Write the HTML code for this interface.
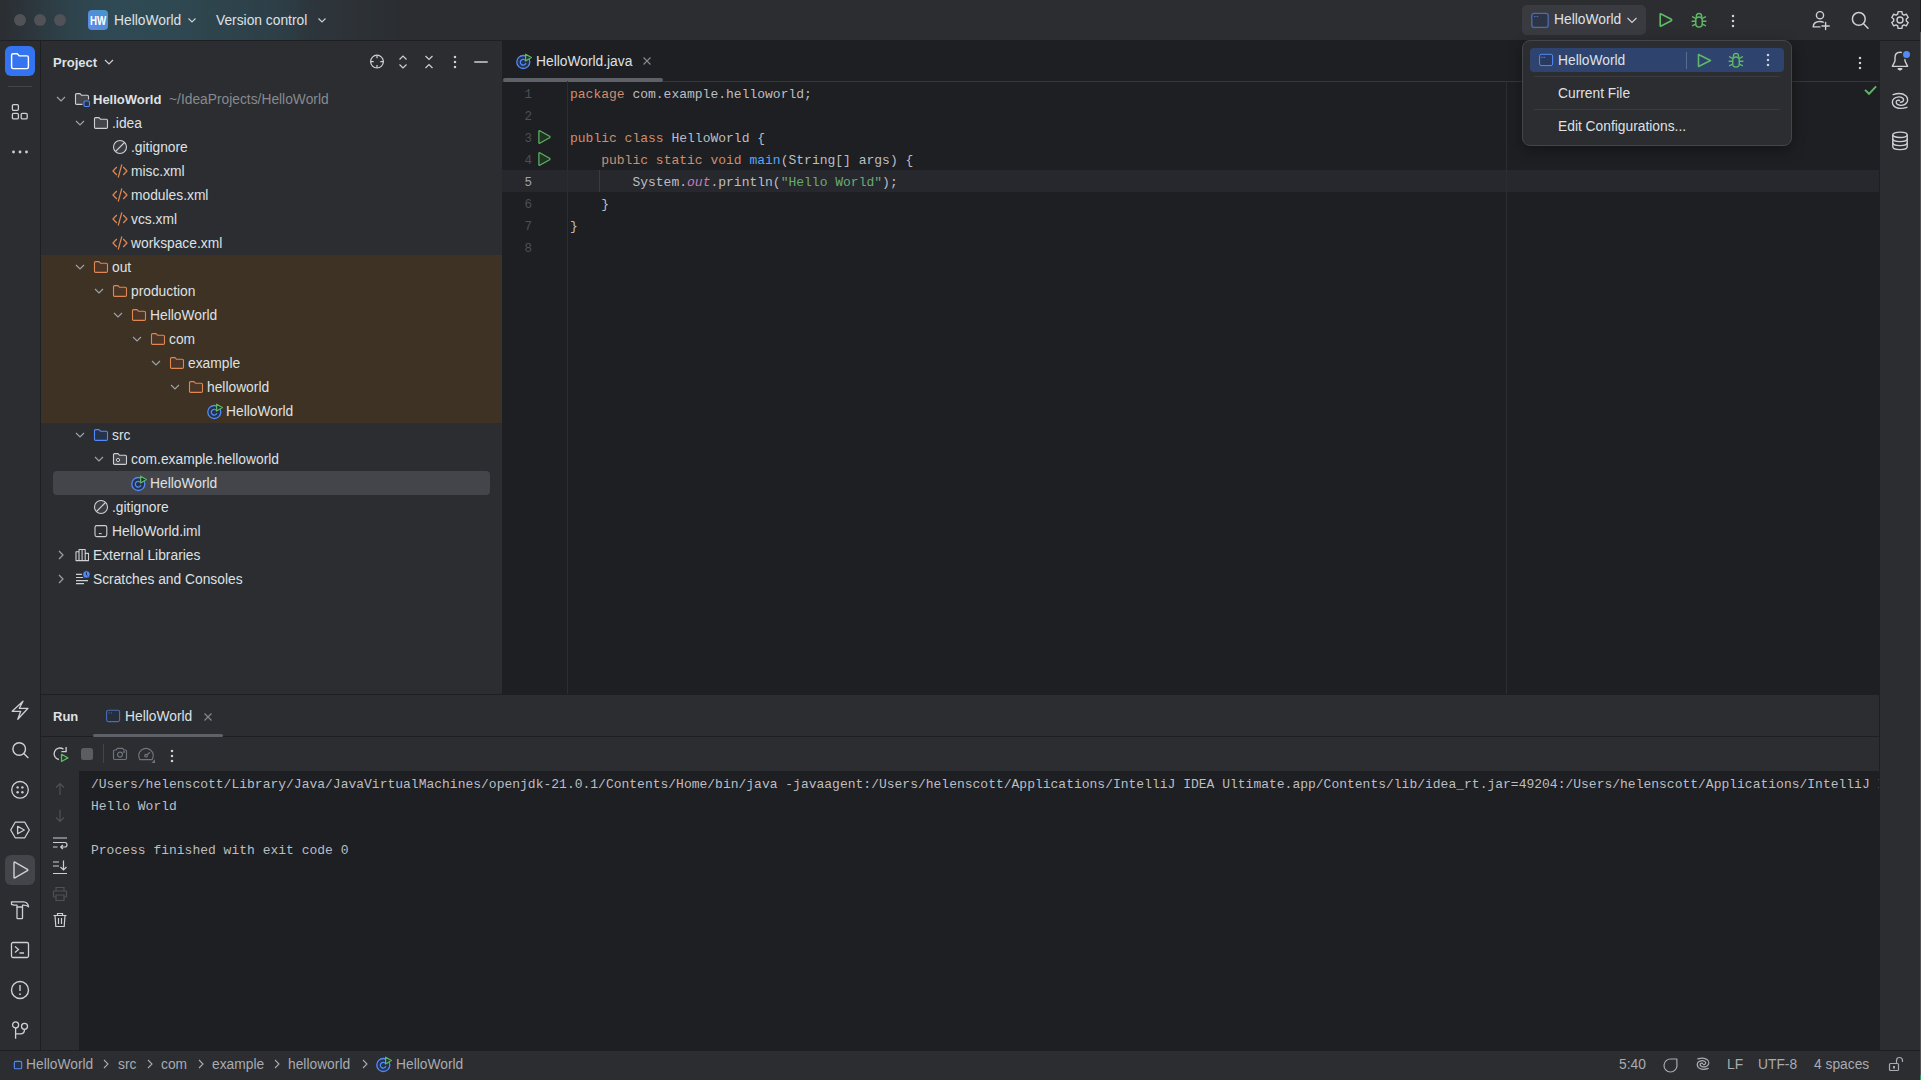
<!DOCTYPE html>
<html><head><meta charset="utf-8">
<style>
*{box-sizing:border-box;margin:0;padding:0}
html,body{width:1921px;height:1080px;overflow:hidden;background:#2B2D30;font-family:"Liberation Sans",sans-serif;font-size:14px;color:#DFE1E5}
.a{position:absolute}
svg{position:absolute;overflow:visible}
.t{position:absolute;white-space:pre;line-height:16px;font-size:13.8px}
.m{font-family:"Liberation Mono",monospace;font-size:13px;white-space:pre;position:absolute;line-height:22px}
#title{left:0;top:0;width:1921px;height:40px;background:linear-gradient(90deg,#2B2E32 0px,#2C363C 30px,#2E434C 70px,#2F4A55 115px,#2F4952 160px,#2E434C 230px,#2D3D45 290px,#2D363D 305px,#2C3136 360px,#2B2D30 410px)}
</style></head><body>
<!-- title bar -->
<div id="title" class="a"></div>
<div class="a" style="left:0;top:40px;width:1921px;height:1px;background:#1E1F22"></div>
<!-- traffic lights -->
<div class="a" style="left:14px;top:14px;width:12px;height:12px;border-radius:6px;background:#505257"></div>
<div class="a" style="left:34px;top:14px;width:12px;height:12px;border-radius:6px;background:#505257"></div>
<div class="a" style="left:54px;top:14px;width:12px;height:12px;border-radius:6px;background:#505257"></div>
<!-- HW badge -->
<div class="a" style="left:88px;top:10px;width:20px;height:20px;border-radius:4px;background:linear-gradient(45deg,#5E88EC,#4596C6)"></div>
<div class="t" style="left:86px;top:12.5px;width:24px;text-align:center;font-size:13.5px;font-weight:bold;color:#fff;letter-spacing:-0.3px;transform:scaleX(0.72)">HW</div>
<div class="t" style="left:114px;top:13px;">HelloWorld</div>
<svg style="left:187px;top:16px" width="10" height="8" viewBox="0 0 10 8"><path d="M1.5 2.5 L5 6 L8.5 2.5" fill="none" stroke="#CED0D6" stroke-width="1.1"/></svg>
<div class="t" style="left:216px;top:13px;">Version control</div>
<svg style="left:317px;top:16px" width="10" height="8" viewBox="0 0 10 8"><path d="M1.5 2.5 L5 6 L8.5 2.5" fill="none" stroke="#CED0D6" stroke-width="1.1"/></svg>

<!-- run config widget -->
<div class="a" style="left:1522px;top:5px;width:124px;height:30px;border-radius:5px;background:#393B40"></div>
<svg style="left:1530px;top:12px" width="20" height="17" viewBox="0 0 20 17"><rect x="1.8" y="1.3" width="16.4" height="14" rx="2.2" fill="#2D3446" stroke="#4B6DB0" stroke-width="1.3"/><rect x="4" y="4" width="1.6" height="1.1" fill="#4B6DB0"/><rect x="6.6" y="4" width="1.6" height="1.1" fill="#4B6DB0"/></svg>
<div class="t" style="left:1554px;top:12px;">HelloWorld</div>
<svg style="left:1626px;top:16px" width="12" height="8" viewBox="0 0 12 8"><path d="M1.5 2 L6 6.5 L10.5 2" fill="none" stroke="#CED0D6" stroke-width="1.2"/></svg>
<!-- play -->
<svg style="left:1658px;top:12px" width="16" height="16" viewBox="0 0 16 16"><path d="M2.2 2.4 Q2.2 1.4 3.1 1.9 L13.3 7.3 Q14.1 8 13.3 8.7 L3.1 14.1 Q2.2 14.6 2.2 13.6 Z" fill="none" stroke="#5FB865" stroke-width="1.7" stroke-linejoin="round"/></svg>
<!-- bug -->
<svg style="left:1691px;top:12px" width="16" height="16" viewBox="0 0 16 16" fill="none" stroke="#5FB865" stroke-width="1.5" stroke-linecap="round"><path d="M5.3 4.6 Q5.3 1.4 8 1.4 Q10.7 1.4 10.7 4.6"/><rect x="4.7" y="5" width="6.6" height="10" rx="3.3" fill="#2B2D30"/><path d="M4.6 6.3 L1.6 4.8 M4.6 9.2 H1.1 M4.6 12.2 L1.6 13.7 M11.4 6.3 L14.4 4.8 M11.4 9.2 H14.9 M11.4 12.2 L14.4 13.7"/></svg>
<!-- more -->
<svg style="left:1730px;top:13px" width="6" height="16" viewBox="0 0 6 16" fill="#CED0D6"><rect x="1.9" y="1.9" width="2.2" height="2.2"/><rect x="1.9" y="6.9" width="2.2" height="2.2"/><rect x="1.9" y="11.9" width="2.2" height="2.2"/></svg>
<!-- add user -->
<svg style="left:1810px;top:10px" width="22" height="22" viewBox="0 0 22 22" fill="none" stroke="#CED0D6" stroke-width="1.4" stroke-linecap="round"><circle cx="10" cy="5.2" r="3.6"/><path d="M10 16.9 H3.2 Q3.2 11.5 10 11.5 Q11.8 11.5 13.2 12.2"/><path d="M15.6 12.4 V19.6 M12 16 H19.2"/></svg>
<!-- search -->
<svg style="left:1850px;top:10px" width="20" height="20" viewBox="0 0 20 20" fill="none" stroke="#CED0D6" stroke-width="1.5" stroke-linecap="round"><circle cx="8.8" cy="8.9" r="6.4"/><path d="M13.6 13.8 L18 18.2"/></svg>
<!-- settings -->
<svg style="left:1890px;top:10px" width="20" height="20" viewBox="0 0 20 20" fill="none" stroke="#CED0D6" stroke-width="1.4" stroke-linejoin="round"><path d="M7.73 4.02 L8.07 1.62 L11.93 1.62 L12.27 4.02 L14.04 5.04 L16.29 4.13 L18.22 7.49 L16.32 8.98 L16.32 11.02 L18.22 12.51 L16.29 15.87 L14.04 14.96 L12.27 15.98 L11.93 18.38 L8.07 18.38 L7.73 15.98 L5.96 14.96 L3.71 15.87 L1.78 12.51 L3.68 11.02 L3.68 8.98 L1.78 7.49 L3.71 4.13 L5.96 5.04 Z"/><circle cx="10" cy="10" r="3"/></svg>


<!-- left stripe -->
<div class="a" style="left:0;top:41px;width:40px;height:1009px;background:#2B2D30"></div>
<div class="a" style="left:40px;top:41px;width:1px;height:1009px;background:#1E1F22"></div>


<!-- left stripe icons -->
<div class="a" style="left:5px;top:46px;width:30px;height:30px;border-radius:6px;background:#3574F0"></div>
<svg style="left:10px;top:52px" width="20" height="18" viewBox="0 0 20 18" fill="none" stroke="#fff" stroke-width="1.4" stroke-linejoin="round"><path d="M1.6 3.3 Q1.6 1.8 3.1 1.8 H7.3 L9.3 3.9 H16.9 Q18.4 3.9 18.4 5.4 V15.1 Q18.4 16.6 16.9 16.6 H3.1 Q1.6 16.6 1.6 15.1 Z"/></svg>
<div class="a" style="left:8px;top:86px;width:24px;height:1px;background:#43454A"></div>
<svg style="left:10px;top:103px" width="20" height="18" viewBox="0 0 20 18" fill="none" stroke="#CED0D6" stroke-width="1.3"><rect x="2.4" y="1.7" width="6" height="5.6" rx="1.2"/><rect x="2.4" y="10.3" width="6" height="5.6" rx="1.2"/><rect x="11.2" y="10.3" width="6" height="5.6" rx="1.2"/></svg>
<svg style="left:10px;top:146px" width="20" height="12" viewBox="0 0 20 12" fill="#CED0D6"><circle cx="3.5" cy="6" r="1.4"/><circle cx="10" cy="6" r="1.4"/><circle cx="16.5" cy="6" r="1.4"/></svg>

<!-- bottom group -->
<svg style="left:10px;top:700px" width="20" height="20" viewBox="0 0 20 20" fill="none" stroke="#CED0D6" stroke-width="1.3" stroke-linejoin="round"><path d="M13 1.2 L9.3 8.3 H18 L7.8 19.2 L10.7 11.3 H2.2 Z"/></svg>
<svg style="left:10px;top:740px" width="20" height="20" viewBox="0 0 20 20" fill="none" stroke="#CED0D6" stroke-width="1.4"><circle cx="9.2" cy="9" r="6.3"/><path d="M13.8 13.6 L18.3 18.1"/></svg>
<svg style="left:10px;top:780px" width="20" height="20" viewBox="0 0 20 20" fill="none" stroke="#CED0D6" stroke-width="1.3"><circle cx="10" cy="9.8" r="8.3"/><g fill="#CED0D6" stroke="none"><circle cx="7.6" cy="7.4" r="1.2"/><circle cx="12.4" cy="7.4" r="1.2"/><circle cx="7.6" cy="12.2" r="1.2"/><circle cx="12.4" cy="12.2" r="1.2"/></g></svg>
<svg style="left:10px;top:820px" width="20" height="20" viewBox="0 0 20 20" fill="none" stroke="#CED0D6" stroke-width="1.3" stroke-linejoin="round"><path d="M5.2 2.2 H14.8 L19.3 10 L14.8 17.8 H5.2 L0.7 10 Z"/><path d="M7.6 6.3 L14.3 10 L7.6 13.7 Z"/></svg>
<div class="a" style="left:5px;top:855px;width:30px;height:30px;border-radius:6px;background:#43454A"></div>
<svg style="left:10px;top:860px" width="20" height="20" viewBox="0 0 20 20" fill="none" stroke="#CED0D6" stroke-width="1.4" stroke-linejoin="round"><path d="M4 2.6 Q4 1.8 4.8 2.2 L17.4 9.3 Q18.2 10 17.4 10.7 L4.8 17.8 Q4 18.2 4 17.4 Z"/></svg>
<svg style="left:10px;top:900px" width="20" height="20" viewBox="0 0 20 20" fill="none" stroke="#CED0D6" stroke-width="1.3" stroke-linejoin="round"><path d="M1.5 1.8 H13.5 Q18 2 18.6 6.8 Q16.5 5.2 13.5 5.2 H12.5 V7 H7 V5.2 H3.8 L1.5 4.3 Z"/><path d="M7 7 V18 Q7 18.6 7.6 18.6 H11.9 Q12.5 18.6 12.5 18 V7"/></svg>
<svg style="left:10px;top:940px" width="20" height="20" viewBox="0 0 20 20" fill="none" stroke="#CED0D6" stroke-width="1.3"><rect x="1.5" y="2.5" width="17" height="15" rx="1.5"/><path d="M5 6.5 L8.5 9.5 L5 12.5 M9.5 13 H14"/></svg>
<svg style="left:10px;top:980px" width="20" height="20" viewBox="0 0 20 20" fill="none" stroke="#CED0D6" stroke-width="1.4"><circle cx="10" cy="10" r="8.5"/><path d="M10 5 V11"/><circle cx="10" cy="14.2" r="0.9" fill="#CED0D6" stroke="none"/></svg>
<svg style="left:10px;top:1020px" width="20" height="20" viewBox="0 0 20 20" fill="none" stroke="#CED0D6" stroke-width="1.3"><circle cx="5.6" cy="4.9" r="3"/><circle cx="14.5" cy="6.3" r="3"/><path d="M5.6 7.9 V18.7 M5.6 13.9 H10.5 Q14.5 13.9 14.5 9.3"/></svg>

<!-- project panel -->
<div class="a" id="proj" style="left:41px;top:41px;width:461px;height:653px;background:#2B2D30"></div>

<div id="tree">
<div class="t" style="left:53px;top:55px;font-size:13px;font-weight:bold">Project</div>
<svg style="left:104px;top:57px" width="10" height="10" viewBox="0 0 10 10"><path d="M1 3 L5 7 L9 3" fill="none" stroke="#CED0D6" stroke-width="1.2"/></svg>
<svg style="left:369px;top:54px" width="16" height="16" viewBox="0 0 16 16" fill="none" stroke="#CED0D6" stroke-width="1.2"><circle cx="8" cy="7.6" r="6.4"/><path d="M8 1.2 V4.3 M8 10.9 V14 M1.6 7.6 H4.7 M11.3 7.6 H14.4"/></svg>
<svg style="left:395px;top:54px" width="16" height="16" viewBox="0 0 16 16" fill="none" stroke="#CED0D6" stroke-width="1.2"><path d="M4.5 5.5 L8 2 L11.5 5.5 M4.5 10.5 L8 14 L11.5 10.5"/></svg>
<svg style="left:421px;top:54px" width="16" height="16" viewBox="0 0 16 16" fill="none" stroke="#CED0D6" stroke-width="1.2"><path d="M4.5 2 L8 5.5 L11.5 2 M4.5 14 L8 10.5 L11.5 14"/></svg>
<svg style="left:452px;top:54px" width="6" height="16" viewBox="0 0 6 16" fill="#CED0D6"><rect x="1.9" y="1.9" width="2.2" height="2.2"/><rect x="1.9" y="6.9" width="2.2" height="2.2"/><rect x="1.9" y="11.9" width="2.2" height="2.2"/></svg>
<div class="a" style="left:474px;top:61px;width:13.5px;height:2px;border-radius:1px;background:#A4A7AD"></div>
<div class="a" style="left:41px;top:255px;width:461px;height:168px;background:#3D3223"></div>
<div class="a" style="left:53px;top:471px;width:437px;height:24px;border-radius:4px;background:#43454A"></div>
<svg style="left:56px;top:94px" width="10" height="10" viewBox="0 0 10 10"><path d="M1 3 L5 7 L9 3" fill="none" stroke="#9DA0A8" stroke-width="1.2"/></svg>
<svg style="left:74px;top:91px" width="16" height="16" viewBox="0 0 16 16"><path d="M8.5 13.4 H2.7 Q1.5 13.4 1.5 12.2 V3.8 Q1.5 2.6 2.7 2.6 H6 L7.6 4.3 H13.3 Q14.5 4.3 14.5 5.5 V8.5" fill="#43454A" stroke="#CED0D6" stroke-width="1.1" stroke-linejoin="round"/><rect x="10" y="10" width="5.5" height="5.5" rx="1.2" fill="#25324D" stroke="#548AF7" stroke-width="1.1"/></svg>
<div class="t" style="left:93px;top:92px;font-size:13px;font-weight:bold">HelloWorld</div>
<div class="t" style="left:169px;top:92px;color:#868A91">~/IdeaProjects/HelloWorld</div>
<svg style="left:75px;top:118px" width="10" height="10" viewBox="0 0 10 10"><path d="M1 3 L5 7 L9 3" fill="none" stroke="#9DA0A8" stroke-width="1.2"/></svg>
<svg style="left:93px;top:115px" width="16" height="16" viewBox="0 0 16 16"><path d="M1.5 3.8 Q1.5 2.6 2.7 2.6 H6 L7.6 4.3 H13.3 Q14.5 4.3 14.5 5.5 V12.2 Q14.5 13.4 13.3 13.4 H2.7 Q1.5 13.4 1.5 12.2 Z" fill="#43454A" stroke="#CED0D6" stroke-width="1.1" stroke-linejoin="round"/></svg>
<div class="t" style="left:112px;top:116px">.idea</div>
<svg style="left:112px;top:139px" width="16" height="16" viewBox="0 0 16 16" fill="none" stroke="#CED0D6" stroke-width="1.1"><circle cx="8" cy="8" r="6.5" fill="#3A3C40"/><path d="M3.5 12.5 L12.5 3.5"/></svg>
<div class="t" style="left:131px;top:140px">.gitignore</div>
<svg style="left:112px;top:163px" width="16" height="16" viewBox="0 0 16 16" fill="none" stroke="#E08855" stroke-width="1.2" stroke-linejoin="round"><path d="M4.8 4 L1 8 L4.8 12 M11.2 4 L15 8 L11.2 12 M9.8 1.5 L6.2 14.5"/></svg>
<div class="t" style="left:131px;top:164px">misc.xml</div>
<svg style="left:112px;top:187px" width="16" height="16" viewBox="0 0 16 16" fill="none" stroke="#E08855" stroke-width="1.2" stroke-linejoin="round"><path d="M4.8 4 L1 8 L4.8 12 M11.2 4 L15 8 L11.2 12 M9.8 1.5 L6.2 14.5"/></svg>
<div class="t" style="left:131px;top:188px">modules.xml</div>
<svg style="left:112px;top:211px" width="16" height="16" viewBox="0 0 16 16" fill="none" stroke="#E08855" stroke-width="1.2" stroke-linejoin="round"><path d="M4.8 4 L1 8 L4.8 12 M11.2 4 L15 8 L11.2 12 M9.8 1.5 L6.2 14.5"/></svg>
<div class="t" style="left:131px;top:212px">vcs.xml</div>
<svg style="left:112px;top:235px" width="16" height="16" viewBox="0 0 16 16" fill="none" stroke="#E08855" stroke-width="1.2" stroke-linejoin="round"><path d="M4.8 4 L1 8 L4.8 12 M11.2 4 L15 8 L11.2 12 M9.8 1.5 L6.2 14.5"/></svg>
<div class="t" style="left:131px;top:236px">workspace.xml</div>
<svg style="left:75px;top:262px" width="10" height="10" viewBox="0 0 10 10"><path d="M1 3 L5 7 L9 3" fill="none" stroke="#9DA0A8" stroke-width="1.2"/></svg>
<svg style="left:93px;top:259px" width="16" height="16" viewBox="0 0 16 16"><path d="M1.5 3.8 Q1.5 2.6 2.7 2.6 H6 L7.6 4.3 H13.3 Q14.5 4.3 14.5 5.5 V12.2 Q14.5 13.4 13.3 13.4 H2.7 Q1.5 13.4 1.5 12.2 Z" fill="#4A3526" stroke="#E08855" stroke-width="1.1" stroke-linejoin="round"/></svg>
<div class="t" style="left:112px;top:260px">out</div>
<svg style="left:94px;top:286px" width="10" height="10" viewBox="0 0 10 10"><path d="M1 3 L5 7 L9 3" fill="none" stroke="#9DA0A8" stroke-width="1.2"/></svg>
<svg style="left:112px;top:283px" width="16" height="16" viewBox="0 0 16 16"><path d="M1.5 3.8 Q1.5 2.6 2.7 2.6 H6 L7.6 4.3 H13.3 Q14.5 4.3 14.5 5.5 V12.2 Q14.5 13.4 13.3 13.4 H2.7 Q1.5 13.4 1.5 12.2 Z" fill="#4A3526" stroke="#E08855" stroke-width="1.1" stroke-linejoin="round"/></svg>
<div class="t" style="left:131px;top:284px">production</div>
<svg style="left:113px;top:310px" width="10" height="10" viewBox="0 0 10 10"><path d="M1 3 L5 7 L9 3" fill="none" stroke="#9DA0A8" stroke-width="1.2"/></svg>
<svg style="left:131px;top:307px" width="16" height="16" viewBox="0 0 16 16"><path d="M1.5 3.8 Q1.5 2.6 2.7 2.6 H6 L7.6 4.3 H13.3 Q14.5 4.3 14.5 5.5 V12.2 Q14.5 13.4 13.3 13.4 H2.7 Q1.5 13.4 1.5 12.2 Z" fill="#4A3526" stroke="#E08855" stroke-width="1.1" stroke-linejoin="round"/></svg>
<div class="t" style="left:150px;top:308px">HelloWorld</div>
<svg style="left:132px;top:334px" width="10" height="10" viewBox="0 0 10 10"><path d="M1 3 L5 7 L9 3" fill="none" stroke="#9DA0A8" stroke-width="1.2"/></svg>
<svg style="left:150px;top:331px" width="16" height="16" viewBox="0 0 16 16"><path d="M1.5 3.8 Q1.5 2.6 2.7 2.6 H6 L7.6 4.3 H13.3 Q14.5 4.3 14.5 5.5 V12.2 Q14.5 13.4 13.3 13.4 H2.7 Q1.5 13.4 1.5 12.2 Z" fill="#4A3526" stroke="#E08855" stroke-width="1.1" stroke-linejoin="round"/></svg>
<div class="t" style="left:169px;top:332px">com</div>
<svg style="left:151px;top:358px" width="10" height="10" viewBox="0 0 10 10"><path d="M1 3 L5 7 L9 3" fill="none" stroke="#9DA0A8" stroke-width="1.2"/></svg>
<svg style="left:169px;top:355px" width="16" height="16" viewBox="0 0 16 16"><path d="M1.5 3.8 Q1.5 2.6 2.7 2.6 H6 L7.6 4.3 H13.3 Q14.5 4.3 14.5 5.5 V12.2 Q14.5 13.4 13.3 13.4 H2.7 Q1.5 13.4 1.5 12.2 Z" fill="#4A3526" stroke="#E08855" stroke-width="1.1" stroke-linejoin="round"/></svg>
<div class="t" style="left:188px;top:356px">example</div>
<svg style="left:170px;top:382px" width="10" height="10" viewBox="0 0 10 10"><path d="M1 3 L5 7 L9 3" fill="none" stroke="#9DA0A8" stroke-width="1.2"/></svg>
<svg style="left:188px;top:379px" width="16" height="16" viewBox="0 0 16 16"><path d="M1.5 3.8 Q1.5 2.6 2.7 2.6 H6 L7.6 4.3 H13.3 Q14.5 4.3 14.5 5.5 V12.2 Q14.5 13.4 13.3 13.4 H2.7 Q1.5 13.4 1.5 12.2 Z" fill="#4A3526" stroke="#E08855" stroke-width="1.1" stroke-linejoin="round"/></svg>
<div class="t" style="left:207px;top:380px">helloworld</div>
<svg style="left:207px;top:403px" width="16" height="16" viewBox="0 0 16 16"><circle cx="7.3" cy="9" r="6.5" fill="#25324D" stroke="#548AF7" stroke-width="1.3"/><path d="M9.6 7.6 A2.9 2.9 0 1 0 9.9 10.3" fill="none" stroke="#548AF7" stroke-width="1.3"/><path d="M9.6 1.2 L15.4 4.6 L9.6 8 Z" fill="#1F3A25" stroke="#5FB865" stroke-width="1.2" stroke-linejoin="round"/></svg>
<div class="t" style="left:226px;top:404px">HelloWorld</div>
<svg style="left:75px;top:430px" width="10" height="10" viewBox="0 0 10 10"><path d="M1 3 L5 7 L9 3" fill="none" stroke="#9DA0A8" stroke-width="1.2"/></svg>
<svg style="left:93px;top:427px" width="16" height="16" viewBox="0 0 16 16"><path d="M1.5 3.8 Q1.5 2.6 2.7 2.6 H6 L7.6 4.3 H13.3 Q14.5 4.3 14.5 5.5 V12.2 Q14.5 13.4 13.3 13.4 H2.7 Q1.5 13.4 1.5 12.2 Z" fill="#25324D" stroke="#548AF7" stroke-width="1.1" stroke-linejoin="round"/></svg>
<div class="t" style="left:112px;top:428px">src</div>
<svg style="left:94px;top:454px" width="10" height="10" viewBox="0 0 10 10"><path d="M1 3 L5 7 L9 3" fill="none" stroke="#9DA0A8" stroke-width="1.2"/></svg>
<svg style="left:112px;top:451px" width="16" height="16" viewBox="0 0 16 16"><path d="M1.5 3.8 Q1.5 2.6 2.7 2.6 H6 L7.6 4.3 H13.3 Q14.5 4.3 14.5 5.5 V12.2 Q14.5 13.4 13.3 13.4 H2.7 Q1.5 13.4 1.5 12.2 Z" fill="#43454A" stroke="#CED0D6" stroke-width="1.1" stroke-linejoin="round"/><circle cx="6" cy="9" r="1.6" fill="#2B2D30" stroke="#CED0D6" stroke-width="1"/></svg>
<div class="t" style="left:131px;top:452px">com.example.helloworld</div>
<svg style="left:131px;top:475px" width="16" height="16" viewBox="0 0 16 16"><circle cx="7.3" cy="9" r="6.5" fill="#25324D" stroke="#548AF7" stroke-width="1.3"/><path d="M9.6 7.6 A2.9 2.9 0 1 0 9.9 10.3" fill="none" stroke="#548AF7" stroke-width="1.3"/><path d="M9.6 1.2 L15.4 4.6 L9.6 8 Z" fill="#1F3A25" stroke="#5FB865" stroke-width="1.2" stroke-linejoin="round"/></svg>
<div class="t" style="left:150px;top:476px">HelloWorld</div>
<svg style="left:93px;top:499px" width="16" height="16" viewBox="0 0 16 16" fill="none" stroke="#CED0D6" stroke-width="1.1"><circle cx="8" cy="8" r="6.5" fill="#3A3C40"/><path d="M3.5 12.5 L12.5 3.5"/></svg>
<div class="t" style="left:112px;top:500px">.gitignore</div>
<svg style="left:93px;top:523px" width="16" height="16" viewBox="0 0 16 16" fill="none" stroke="#CED0D6" stroke-width="1.1"><rect x="2" y="2.6" width="11.8" height="11" rx="1.8"/><path d="M5.8 10.6 H8.6"/></svg>
<div class="t" style="left:112px;top:524px">HelloWorld.iml</div>
<svg style="left:56px;top:550px" width="10" height="10" viewBox="0 0 10 10"><path d="M3 1 L7 5 L3 9" fill="none" stroke="#9DA0A8" stroke-width="1.2"/></svg>
<svg style="left:74px;top:547px" width="16" height="16" viewBox="0 0 16 16" fill="none" stroke="#CED0D6" stroke-width="1.1" stroke-linejoin="round"><path d="M2 13.6 V4.8 H5 V2.5 H11.2 V6.4 H14.5 V13.6 Z M5 4.8 V13.6 M8.1 2.5 V13.6 M11.2 6.4 V13.6"/></svg>
<div class="t" style="left:93px;top:548px">External Libraries</div>
<svg style="left:56px;top:574px" width="10" height="10" viewBox="0 0 10 10"><path d="M3 1 L7 5 L3 9" fill="none" stroke="#9DA0A8" stroke-width="1.2"/></svg>
<svg style="left:74px;top:571px" width="16" height="16" viewBox="0 0 16 16" fill="none" stroke="#CED0D6" stroke-width="1.2"><path d="M2 3.4 H7.9 M2 6.5 H9.1 M2 9.6 H14 M2 12.6 H10"/><circle cx="12.4" cy="3.4" r="3.6" fill="#548AF7" stroke="#2B2D30" stroke-width="0.6"/><path d="M12.4 1.3 V3.9 L13.6 4.9" stroke="#1E1F22" stroke-width="0.9"/></svg>
<div class="t" style="left:93px;top:572px">Scratches and Consoles</div>
</div>
<!-- editor -->
<div class="a" id="editor" style="left:502px;top:41px;width:1378px;height:653px;background:#1E1F22"></div>

<div id="code">
<svg style="left:516px;top:53px" width="16" height="16" viewBox="0 0 16 16"><circle cx="7.3" cy="9" r="6.5" fill="#25324D" stroke="#548AF7" stroke-width="1.3"/><path d="M9.6 7.6 A2.9 2.9 0 1 0 9.9 10.3" fill="none" stroke="#548AF7" stroke-width="1.3"/><path d="M9.6 1.2 L15.4 4.6 L9.6 8 Z" fill="#1F3A25" stroke="#5FB865" stroke-width="1.2" stroke-linejoin="round"/></svg>
<div class="t" style="left:536px;top:54px">HelloWorld.java</div>
<svg style="left:642px;top:56px" width="10" height="10" viewBox="0 0 10 10"><path d="M1.5 1.5 L8.5 8.5 M8.5 1.5 L1.5 8.5" stroke="#868A91" stroke-width="1.1"/></svg>
<div class="a" style="left:502px;top:81px;width:1377px;height:1px;background:#35373B"></div>
<div class="a" style="left:503px;top:78px;width:160px;height:4px;border-radius:2px;background:#5E6167"></div>
<svg style="left:1857px;top:55px" width="6" height="16" viewBox="0 0 6 16" fill="#CED0D6"><rect x="1.9" y="1.9" width="2.2" height="2.2"/><rect x="1.9" y="6.9" width="2.2" height="2.2"/><rect x="1.9" y="11.9" width="2.2" height="2.2"/></svg>
<div class="a" style="left:502px;top:170px;width:1377px;height:22px;background:#26282E"></div>
<div class="a" style="left:567px;top:81px;width:1px;height:613px;background:#2B2D30"></div>
<div class="a" style="left:1506px;top:81px;width:1px;height:613px;background:#2B2D30"></div>
<div class="a" style="left:599px;top:170px;width:1px;height:22px;background:#393B40"></div>
<div class="m" style="left:480px;width:52px;text-align:right;top:84px;color:#4B5059;font-size:12.5px">1</div>
<div class="m" style="left:480px;width:52px;text-align:right;top:106px;color:#4B5059;font-size:12.5px">2</div>
<div class="m" style="left:480px;width:52px;text-align:right;top:128px;color:#4B5059;font-size:12.5px">3</div>
<div class="m" style="left:480px;width:52px;text-align:right;top:150px;color:#4B5059;font-size:12.5px">4</div>
<div class="m" style="left:480px;width:52px;text-align:right;top:172px;color:#A1A3AB;font-size:12.5px">5</div>
<div class="m" style="left:480px;width:52px;text-align:right;top:194px;color:#4B5059;font-size:12.5px">6</div>
<div class="m" style="left:480px;width:52px;text-align:right;top:216px;color:#4B5059;font-size:12.5px">7</div>
<div class="m" style="left:480px;width:52px;text-align:right;top:238px;color:#4B5059;font-size:12.5px">8</div>
<svg style="left:537px;top:129px" width="16" height="16" viewBox="0 0 16 16"><path d="M1.9 2.3 Q1.9 1.4 2.7 1.8 L12.6 7.3 Q13.4 8 12.6 8.7 L2.7 14.2 Q1.9 14.6 1.9 13.7 Z" fill="#203322" stroke="#5CB262" stroke-width="1.25" stroke-linejoin="round"/></svg>
<svg style="left:537px;top:151px" width="16" height="16" viewBox="0 0 16 16"><path d="M1.9 2.3 Q1.9 1.4 2.7 1.8 L12.6 7.3 Q13.4 8 12.6 8.7 L2.7 14.2 Q1.9 14.6 1.9 13.7 Z" fill="#203322" stroke="#5CB262" stroke-width="1.25" stroke-linejoin="round"/></svg>
<div class="m" style="left:570px;top:84px;color:#BCBEC4"><span style="color:#CF8E6D">package</span> com.example.helloworld;</div>
<div class="m" style="left:570px;top:106px;color:#BCBEC4"></div>
<div class="m" style="left:570px;top:128px;color:#BCBEC4"><span style="color:#CF8E6D">public class</span> HelloWorld {</div>
<div class="m" style="left:570px;top:150px;color:#BCBEC4">    <span style="color:#CF8E6D">public static void</span> <span style="color:#56A8F5">main</span>(String[] args) {</div>
<div class="m" style="left:570px;top:172px;color:#BCBEC4">        System.<span style="color:#C77DBB;font-style:italic">out</span>.println(<span style="color:#6AAB73">"Hello World"</span>);</div>
<div class="m" style="left:570px;top:194px;color:#BCBEC4">    }</div>
<div class="m" style="left:570px;top:216px;color:#BCBEC4">}</div>
<div class="m" style="left:570px;top:238px;color:#BCBEC4"></div>
<svg style="left:1862px;top:84px" width="16" height="12" viewBox="0 0 16 12"><path d="M3 5.9 L7 9.8 L14.1 2.3" fill="none" stroke="#5FB865" stroke-width="1.9"/></svg>
</div>
<!-- right stripe -->
<div class="a" style="left:1879px;top:41px;width:1px;height:1009px;background:#1E1F22"></div>
<div class="a" style="left:1880px;top:41px;width:41px;height:1009px;background:#2B2D30"></div>


<!-- right stripe icons -->
<svg style="left:1890px;top:50px" width="20" height="22" viewBox="0 0 20 22" fill="none" stroke="#CED0D6" stroke-width="1.4" stroke-linejoin="round"><path d="M5 11 V7.8 Q5 2.3 10 2.3 Q15 2.3 15 7.8 V11 L17.6 16.4 H2.4 Z"/><path d="M8.2 18.8 H11.8 L10 20 Z" fill="#CED0D6"/></svg>
<div class="a" style="left:1903px;top:51px;width:7.2px;height:7.2px;border-radius:4px;background:#548AF7;box-shadow:0 0 0 1.5px #2B2D30"></div>
<svg style="left:1888px;top:88px" width="24" height="24" viewBox="0 0 24 24" fill="none" stroke="#CED0D6" stroke-width="1.4" stroke-linecap="round"><path d="M5.1 6.6 C9 5.3 14.5 5 17.8 7.8 C20 9.8 20 13 18.9 14.4 C17.5 16.5 14.5 17.5 12.4 17.3 C10 17 8.2 15.8 8.2 14 C8.2 12.5 10 11.8 11.5 12.5 M18.9 19.3 C16 20.3 11 20.8 7.8 19.3 C5 18 4.4 15.5 4.4 14 C4.4 11.5 6.5 9.5 10.7 8.9 C13 8.7 15.6 10 15.6 11.8 C15.6 13.3 14 14.3 12.4 14.2"/></svg>
<svg style="left:1891px;top:131px" width="18" height="20" viewBox="0 0 18 20" fill="none" stroke="#CED0D6" stroke-width="1.4"><ellipse cx="9" cy="3.8" rx="7.2" ry="2.7"/><path d="M1.8 3.8 V15.8 Q1.8 18.6 9 18.6 Q16.2 18.6 16.2 15.8 V3.8"/><path d="M1.8 7.8 Q1.8 10.6 9 10.6 Q16.2 10.6 16.2 7.8 M1.8 11.8 Q1.8 14.6 9 14.6 Q16.2 14.6 16.2 11.8"/></svg>

<!-- popup -->
<div class="a" style="left:1522px;top:40px;width:270px;height:106px;border-radius:8px;background:#2B2D30;border:1px solid #43454A;box-shadow:0 4px 14px rgba(0,0,0,0.35)"></div>
<div class="a" style="left:1530px;top:48px;width:254px;height:24px;border-radius:4px;background:#2E436E"></div>
<svg style="left:1538px;top:53px" width="16" height="14" viewBox="0 0 16 14"><rect x="1.6" y="1.3" width="13" height="11.3" rx="1.6" fill="#293A5E" stroke="#548AF7" stroke-width="1"/><rect x="3.3" y="3.8" width="1.3" height="1" fill="#548AF7"/><rect x="5.6" y="3.8" width="1.3" height="1" fill="#548AF7"/></svg>
<div class="t" style="left:1558px;top:53px">HelloWorld</div>
<div class="a" style="left:1686px;top:52px;width:1px;height:17px;background:#5A6B8C"></div>
<svg style="left:1697px;top:53px" width="15" height="15" viewBox="0 0 15 15"><path d="M1.5 1.5 L13.5 7.5 L1.5 13.5 Z" fill="none" stroke="#5FB865" stroke-width="1.6" stroke-linejoin="round"/></svg>
<svg style="left:1728px;top:52px" width="16" height="16" viewBox="0 0 16 16" fill="none" stroke="#5FB865" stroke-width="1.4" stroke-linecap="round"><path d="M5.3 4.6 Q5.3 1.4 8 1.4 Q10.7 1.4 10.7 4.6"/><rect x="4.7" y="5" width="6.6" height="10" rx="3.3" fill="#2E436E"/><path d="M4.6 6.3 L1.6 4.8 M4.6 9.2 H1.1 M4.6 12.2 L1.6 13.7 M11.4 6.3 L14.4 4.8 M11.4 9.2 H14.9 M11.4 12.2 L14.4 13.7"/></svg>
<svg style="left:1765px;top:52px" width="6" height="16" viewBox="0 0 6 16" fill="#CED0D6"><rect x="1.9" y="1.9" width="2.2" height="2.2"/><rect x="1.9" y="6.9" width="2.2" height="2.2"/><rect x="1.9" y="11.9" width="2.2" height="2.2"/></svg>
<div class="a" style="left:1534px;top:76px;width:246px;height:1px;background:#393B40"></div>
<div class="t" style="left:1558px;top:86px">Current File</div>
<div class="a" style="left:1534px;top:109px;width:246px;height:1px;background:#393B40"></div>
<div class="t" style="left:1558px;top:119px">Edit Configurations...</div>

<!-- bottom panel -->
<div class="a" style="left:41px;top:694px;width:1838px;height:1px;background:#1E1F22"></div>
<div class="a" id="bottom" style="left:41px;top:695px;width:1838px;height:355px;background:#2B2D30"></div>

<!-- status bar -->
<div class="a" style="left:0;top:1050px;width:1921px;height:1px;background:#1E1F22"></div>
<div class="a" id="status" style="left:0;top:1051px;width:1921px;height:29px;background:#2B2D30"></div>


<!-- run tabs -->
<div class="t" style="left:53px;top:709px;font-size:13px;font-weight:bold">Run</div>
<svg style="left:105px;top:708px" width="16" height="16" viewBox="0 0 16 16"><rect x="1.6" y="2.2" width="13" height="11.4" rx="1.6" fill="#262D3D" stroke="#4B6DB0" stroke-width="1.1"/><rect x="3.5" y="4.5" width="1.3" height="0.9" fill="#4B6DB0"/><rect x="5.8" y="4.5" width="1.3" height="0.9" fill="#4B6DB0"/></svg>
<div class="t" style="left:125px;top:709px">HelloWorld</div>
<svg style="left:203px;top:712px" width="10" height="10" viewBox="0 0 10 10"><path d="M1.5 1.5 L8.5 8.5 M8.5 1.5 L1.5 8.5" stroke="#868A91" stroke-width="1.1"/></svg>
<div class="a" style="left:41px;top:736px;width:1838px;height:1px;background:#1E1F22"></div>
<div class="a" style="left:93px;top:734px;width:130px;height:3px;border-radius:1.5px;background:#5E6167"></div>
<!-- run toolbar -->
<svg style="left:52px;top:746px" width="18" height="18" viewBox="0 0 18 18" fill="none" stroke="#CED0D6" stroke-width="1.3"><path d="M11.47 3.23 A5.8 5.8 0 1 0 6.89 13.51"/><path d="M14.1 1 V5.7 H9.4"/><path d="M9.5 8.3 L15.9 11.9 L9.5 15.5 Z" fill="#1F3A25" stroke="#5FB865" stroke-width="1.3" stroke-linejoin="round"/></svg>
<div class="a" style="left:81px;top:748px;width:12px;height:12px;border-radius:2.5px;background:#5C5D61"></div>
<div class="a" style="left:103px;top:744px;width:1px;height:19px;background:#43454A"></div>
<svg style="left:112px;top:746px" width="16" height="16" viewBox="0 0 16 16" fill="none" stroke="#6F737A" stroke-width="1.2" stroke-linejoin="round"><path d="M1.5 5.2 Q1.5 4 2.7 4 H4.3 L5.3 2.3 H10.7 L11.7 4 H13.3 Q14.5 4 14.5 5.2 V12.3 Q14.5 13.5 13.3 13.5 H2.7 Q1.5 13.5 1.5 12.3 Z"/><circle cx="8" cy="8.6" r="2.5"/><circle cx="12" cy="6" r="0.4" fill="#6F737A"/></svg>
<svg style="left:138px;top:746px" width="18" height="18" viewBox="0 0 18 18" fill="none" stroke="#6F737A" stroke-width="1.2"><path d="M1.9 13.7 A7.3 7.3 0 1 1 14.1 13.7 Z" stroke-linejoin="round"/><circle cx="8" cy="9.7" r="1.3"/><path d="M9 8.7 L12 6.2"/><path d="M13.4 17 L17 13.3 V17 Z" fill="#6F737A" stroke="none"/></svg>
<svg style="left:169px;top:748px" width="6" height="16" viewBox="0 0 6 16" fill="#CED0D6"><rect x="1.9" y="1.9" width="2.2" height="2.2"/><rect x="1.9" y="6.9" width="2.2" height="2.2"/><rect x="1.9" y="11.9" width="2.2" height="2.2"/></svg>
<!-- console -->
<div class="a" style="left:79px;top:771px;width:1800px;height:279px;background:#1E1F22"></div>
<svg style="left:52px;top:781px" width="16" height="16" viewBox="0 0 16 16" fill="none" stroke="#4E5157" stroke-width="1.2"><path d="M8 14 V2.5 M4 6.5 L8 2.5 L12 6.5"/></svg>
<svg style="left:52px;top:808px" width="16" height="16" viewBox="0 0 16 16" fill="none" stroke="#4E5157" stroke-width="1.2"><path d="M8 2 V13.5 M4 9.5 L8 13.5 L12 9.5"/></svg>
<svg style="left:52px;top:835px" width="16" height="16" viewBox="0 0 16 16" fill="none" stroke="#CED0D6" stroke-width="1.2"><path d="M1 3 H15 M1 7.5 H13 Q15 7.5 15 9.8 Q15 12 13 12 H9 M10.8 10 L8.8 12 L10.8 14 M1 12 H5.5"/></svg>
<svg style="left:52px;top:859px" width="16" height="16" viewBox="0 0 16 16" fill="none" stroke="#CED0D6" stroke-width="1.2"><path d="M1 3 H7 M1 7 H7 M1 14.5 H15 M11.5 1.5 V11 M8.5 8 L11.5 11 L14.5 8"/></svg>
<svg style="left:52px;top:886px" width="16" height="16" viewBox="0 0 16 16" fill="none" stroke="#4E5157" stroke-width="1.2"><path d="M4 5 V1.5 H12 V5 M4 11 H2 Q1.5 11 1.5 10.5 V5.5 Q1.5 5 2 5 H14 Q14.5 5 14.5 5.5 V10.5 Q14.5 11 14 11 H12 M4 9 H12 V14.5 H4 Z"/></svg>
<svg style="left:52px;top:912px" width="16" height="16" viewBox="0 0 16 16" fill="none" stroke="#CED0D6" stroke-width="1.2"><path d="M1.5 3.5 H14.5 M5.5 3.5 V1.5 H10.5 V3.5 M3 3.5 L3.8 14.5 H12.2 L13 3.5 M6.5 6 V12 M9.5 6 V12"/></svg>
<div class="a" style="left:79px;top:771px;width:1800px;height:279px;overflow:hidden">
<div class="m" style="left:12px;top:3px;color:#BCBEC4">/Users/helenscott/Library/Java/JavaVirtualMachines/openjdk-21.0.1/Contents/Home/bin/java -javaagent:/Users/helenscott/Applications/IntelliJ IDEA Ultimate.app/Contents/lib/idea_rt.jar=49204:/Users/helenscott/Applications/IntelliJ IDEA</div>
<div class="m" style="left:12px;top:25px;color:#BCBEC4">Hello World</div>
<div class="m" style="left:12px;top:69px;color:#BCBEC4">Process finished with exit code 0</div>
</div>

<!-- status bar -->
<svg style="left:13px;top:1058px" width="10" height="12" viewBox="0 0 10 12"><rect x="1.3" y="3.4" width="7.4" height="7.4" rx="1.4" fill="#25324D" stroke="#548AF7" stroke-width="1.1"/></svg>
<div class="t" style="left:26px;top:1057px;color:#A8ABB0">HelloWorld</div>
<div class="t" style="left:118px;top:1057px;color:#A8ABB0">src</div>
<div class="t" style="left:161px;top:1057px;color:#A8ABB0">com</div>
<div class="t" style="left:212px;top:1057px;color:#A8ABB0">example</div>
<div class="t" style="left:288px;top:1057px;color:#A8ABB0">helloworld</div>
<div class="t" style="left:396px;top:1057px;color:#A8ABB0">HelloWorld</div>
<svg style="left:102px;top:1059px" width="8" height="10" viewBox="0 0 8 10"><path d="M2 1 L6 5 L2 9" fill="none" stroke="#A8ABB0" stroke-width="1.1"/></svg>
<svg style="left:146px;top:1059px" width="8" height="10" viewBox="0 0 8 10"><path d="M2 1 L6 5 L2 9" fill="none" stroke="#A8ABB0" stroke-width="1.1"/></svg>
<svg style="left:197px;top:1059px" width="8" height="10" viewBox="0 0 8 10"><path d="M2 1 L6 5 L2 9" fill="none" stroke="#A8ABB0" stroke-width="1.1"/></svg>
<svg style="left:273px;top:1059px" width="8" height="10" viewBox="0 0 8 10"><path d="M2 1 L6 5 L2 9" fill="none" stroke="#A8ABB0" stroke-width="1.1"/></svg>
<svg style="left:361px;top:1059px" width="8" height="10" viewBox="0 0 8 10"><path d="M2 1 L6 5 L2 9" fill="none" stroke="#A8ABB0" stroke-width="1.1"/></svg>
<svg style="left:376px;top:1056px" width="16" height="16" viewBox="0 0 16 16"><circle cx="7.3" cy="9" r="6.5" fill="#25324D" stroke="#548AF7" stroke-width="1.3"/><path d="M9.6 7.6 A2.9 2.9 0 1 0 9.9 10.3" fill="none" stroke="#548AF7" stroke-width="1.3"/><path d="M9.6 1.2 L15.4 4.6 L9.6 8 Z" fill="#1F3A25" stroke="#5FB865" stroke-width="1.2" stroke-linejoin="round"/></svg>

<div class="t" style="left:1619px;top:1057px;color:#A8ABB0">5:40</div>
<svg style="left:1662px;top:1057px" width="16" height="16" viewBox="0 0 16 16" fill="none" stroke="#A8ABB0" stroke-width="1.2" stroke-linejoin="round"><path d="M14.8 2 H9 A6.5 6.5 0 1 0 15 8.5 Z"/></svg>
<svg style="left:1694px;top:1054px" width="18" height="18" viewBox="0 0 24 24" fill="none" stroke="#A8ABB0" stroke-width="1.7" stroke-linecap="round"><path d="M5.1 6.6 C9 5.3 14.5 5 17.8 7.8 C20 9.8 20 13 18.9 14.4 C17.5 16.5 14.5 17.5 12.4 17.3 C10 17 8.2 15.8 8.2 14 C8.2 12.5 10 11.8 11.5 12.5 M18.9 19.3 C16 20.3 11 20.8 7.8 19.3 C5 18 4.4 15.5 4.4 14 C4.4 11.5 6.5 9.5 10.7 8.9 C13 8.7 15.6 10 15.6 11.8 C15.6 13.3 14 14.3 12.4 14.2"/></svg>
<div class="t" style="left:1727px;top:1057px;color:#A8ABB0">LF</div>
<div class="t" style="left:1758px;top:1057px;color:#A8ABB0">UTF-8</div>
<div class="t" style="left:1814px;top:1057px;color:#A8ABB0">4 spaces</div>
<svg style="left:1888px;top:1056px" width="16" height="16" viewBox="0 0 16 16" fill="none" stroke="#A8ABB0" stroke-width="1.2"><rect x="1.5" y="7.5" width="9" height="7" rx="1"/><path d="M8.5 7.5 V4.5 Q8.5 1.5 11.5 1.5 Q14.5 1.5 14.5 4.5 V6"/><rect x="5" y="10" width="2" height="2.5" fill="#A8ABB0" stroke="none"/></svg>


<!-- window edge -->
<div class="a" style="left:1920px;top:0;width:1px;height:32px;background:#1C1D20"></div>
<div class="a" style="left:1920px;top:32px;width:1px;height:1043px;background:#505256"></div>
<div class="a" style="left:1920px;top:1075px;width:1px;height:5px;background:#2A9D5C"></div>
</body></html>
